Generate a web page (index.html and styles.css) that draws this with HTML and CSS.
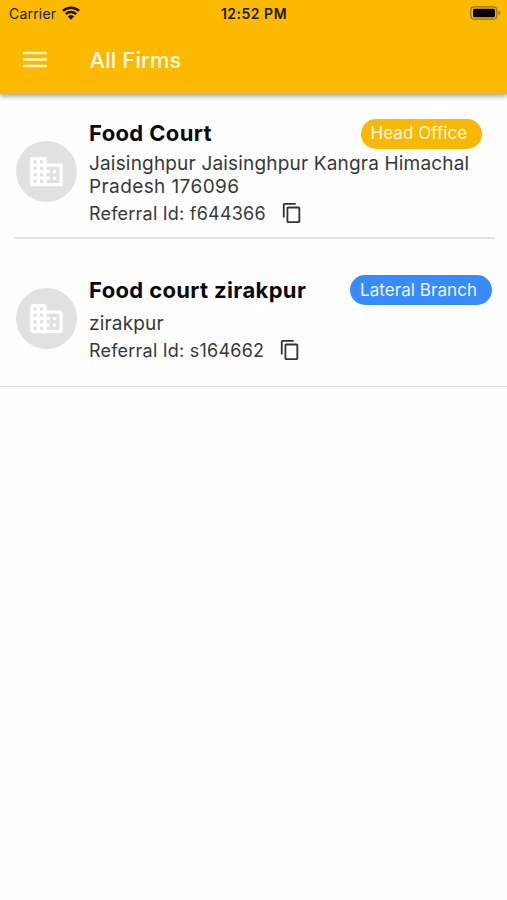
FILE: index.html
```html
<!DOCTYPE html>
<html lang="en">
<head>
<meta charset="utf-8">
<title>All Firms</title>
<link rel="stylesheet" href="styles.css">
</head>
<body>
<svg class="symbols" aria-hidden="true">
  <symbol id="building" viewBox="0 0 24 24"><path d="M12 7V3H2v18h20V7H12zM6 19H4v-2h2v2zm0-4H4v-2h2v2zm0-4H4V9h2v2zm0-4H4V5h2v2zm4 12H8v-2h2v2zm0-4H8v-2h2v2zm0-4H8V9h2v2zm0-4H8V5h2v2zm10 12h-8v-2h2v-2h-2v-2h2v-2h-2V9h8v10zm-2-8h-2v2h2v-2zm0 4h-2v2h2v-2z"/></symbol>
  <symbol id="building-round" viewBox="0 0 24 24"><path d="M12 7V5a2 2 0 0 0-2-2H4a2 2 0 0 0-2 2v14a2 2 0 0 0 2 2h16a2 2 0 0 0 2-2V9a2 2 0 0 0-2-2H12zM6 19H4v-2h2v2zm0-4H4v-2h2v2zm0-4H4V9h2v2zm0-4H4V5h2v2zm4 12H8v-2h2v2zm0-4H8v-2h2v2zm0-4H8V9h2v2zm0-4H8V5h2v2zm9 12h-7v-2h2v-2h-2v-2h2v-2h-2V9h7a1 1 0 0 1 1 1v8a1 1 0 0 1-1 1zm-1-8h-2v2h2v-2zm0 4h-2v2h2v-2z"/></symbol>
  <symbol id="copy" viewBox="0 0 24 24"><path d="M16 1H4c-1.1 0-2 .9-2 2v14h2V3h12V1zm3 4H8c-1.1 0-2 .9-2 2v14c0 1.100.9 2 2 2h11c1.100 0 2-.9 2-2V7c0-1.100-.9-2-2-2zm0 16H8V7h11v14z"/></symbol>
</svg>
<header class="header">
  <div class="status">
    <div class="carrier"><span>Carrier</span>
      <svg class="wifi" viewBox="0 0 18 14"><path d="M1 4.900a11.500 11.500 0 0 1 16 0M3.800 8.100a7.500 7.500 0 0 1 10.400 0"/><path class="dot" d="M9 13.700 5.900 10.500a4.600 4.600 0 0 1 6.200 0z"/></svg>
    </div>
    <span class="time">12:52 PM</span>
    <svg class="battery" viewBox="0 0 31 14"><rect class="shell" x=".8" y=".8" width="26" height="12.400" rx="3.500"/><rect x="3" y="2.800" width="22" height="8.400" rx="1.500"/><path class="cap" d="M28.500 4.500q1.700.8 1.700 2.500t-1.700 2.500z"/></svg>
  </div>
  <div class="toolbar">
    <svg class="menu" viewBox="0 0 24 24"><path d="M3 18h18v-2H3v2zm0-5h18v-2H3v2zm0-7v2h18V6H3z"/></svg>
    <h1>All Firms</h1>
  </div>
</header>
<main>
  <article class="firm head-firm">
    <div class="avatar"><svg><use href="#building"/></svg></div>
    <div class="details">
      <div class="heading"><h2>Food Court</h2><span class="badge head"><span>Head Office</span></span></div>
      <p class="address"><span class="line1">Jaisinghpur Jaisinghpur Kangra Himachal</span><br><span class="line2">Pradesh 176096</span></p>
      <div class="referral"><span>Referral Id: f644366</span><svg><use href="#copy"/></svg></div>
    </div>
  </article>
  <article class="firm lateral-firm">
    <div class="avatar"><svg><use href="#building-round"/></svg></div>
    <div class="details">
      <div class="heading"><h2>Food court zirakpur</h2><span class="badge lateral"><span>Lateral Branch</span></span></div>
      <p class="address"><span>zirakpur</span></p>
      <div class="referral"><span>Referral Id: s164662</span><svg><use href="#copy"/></svg></div>
    </div>
  </article>
</main>
</body>
</html>
```
FILE: styles.css
```css
* { box-sizing: border-box; }
body { margin: 0; min-height: 900px; background: #fefefe; color: #383838; font-family: Inter, "Liberation Sans", sans-serif; }
h1, h2, p { margin: 0; white-space: nowrap; }
svg { display: block; flex: none; }
.symbols { display: none; }
.header { height: 94px; background: #fbba00; box-shadow: 0 2px 5px #0006; }
.status { height: 27px; display: grid; grid-template-columns: 1fr auto 1fr; align-items: center; padding: 0 6px 0 9px; color: #201a05; font-size: 14px; }
.carrier { display: flex; align-items: center; gap: 6px; letter-spacing: .2px; }
.wifi { width: 18px; height: 14px; margin-top: -2px; fill: none; stroke: #171200; stroke-width: 2.5; }
.wifi .dot { fill: #171200; stroke: none; }
.time { font-weight: 600; letter-spacing: .5px; margin-right: 2px; }
.battery { width: 31px; height: 14px; margin-top: -1px; justify-self: end; fill: #000; }
.battery .shell { fill: none; stroke: #947006; stroke-width: 1.2; }
.battery .cap { fill: #947006; }
.toolbar { height: 66px; display: flex; align-items: center; padding-left: 19px; color: #fff9e0; }
.menu { width: 32px; height: 31px; margin-top: -1px; fill: #fff5cc; }
h1 { margin-left: 38.5px; font-size: 22px; font-weight: 500; line-height: 30px; letter-spacing: .08px; }
.firm { display: flex; }
.head-firm { height: 144.5px; margin: 0 12.5px 0 13.5px; padding: 24px 0 0 2px; border-bottom: 2px solid #e4e4e4; }
.lateral-firm { height: 148.5px; border-bottom: 1px solid #dedede; padding: 36px 0 0 15.5px; }
.avatar { width: 61.5px; height: 61.5px; flex: none; border-radius: 50%; background: #e1e1e1; display: grid; place-items: center; }
.head-firm .avatar { margin-top: 22.5px; }
.lateral-firm .avatar { margin-top: 13px; }
.avatar svg { width: 39px; height: 39px; fill: #fff; }
.details { flex: 1; margin-left: 12px; }
.heading { height: 31px; display: flex; align-items: center; justify-content: space-between; }
h2 { color: #080808; font-size: 22px; line-height: 30px; font-weight: 700; letter-spacing: .36px; }
.head-firm h2 { margin-top: -1px; }
.badge { height: 30px; border-radius: 15px; color: #fff; font-size: 17px; line-height: 29px; padding-left: 10px; white-space: nowrap; letter-spacing: .06px; }
.head { width: 121.5px; margin-right: 12.5px; background: #f9b806; color: #fff8dc; }
.lateral { width: 142px; margin-right: 15px; background: #388bfc; color: #edf5ff; line-height: 30px; }
.address { font-size: 19px; line-height: 23px; letter-spacing: .18px; }
.address .line2 { letter-spacing: .4px; }
.head-firm .address { margin-top: 3px; }
.lateral-firm .address { margin-top: 6px; }
.referral { height: 27px; margin-top: 2px; display: flex; align-items: center; gap: 15px; font-size: 18px; letter-spacing: .22px; }
.referral svg { width: 22px; height: 22px; margin-top: -1px; fill: #333; }
```
